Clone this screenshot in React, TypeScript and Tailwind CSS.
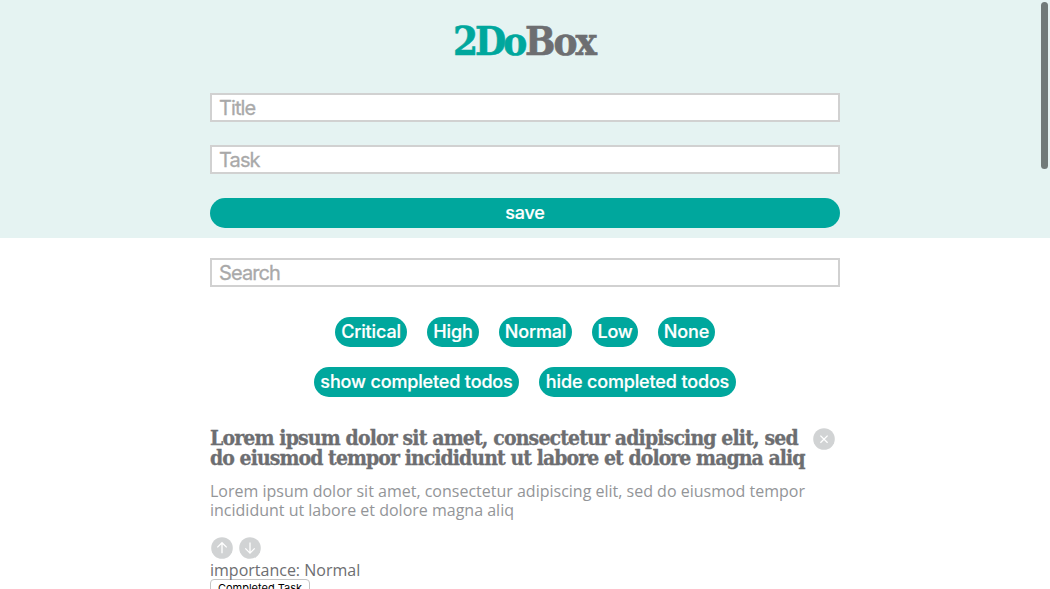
import React from "react";

const title = "font-['Roboto_Slab','DejaVu_Serif_Condensed','DejaVu_Serif',serif] font-bold";
const pill =
  "flex h-[30px] items-center justify-center rounded-full bg-[#00a79d] pb-px font-['Inter',sans-serif] text-[18px] font-medium tracking-[-0.15px] whitespace-nowrap text-white [-webkit-text-stroke:0.2px_white]";
const field =
  "block h-[29px] w-full rounded-none border-2 border-[#d1d1d1] bg-white pr-2 pl-[7px] font-['Inter',sans-serif] text-[20px] tracking-[-0.9px] text-[#6d6e71] outline-none placeholder:text-[#a9a9a9] [-webkit-text-stroke:0.3px_#a9a9a9]";

function CircleIcon({ label, d }: { label: string; d: string }) {
  return (
    <button aria-label={label} className="block size-[22px] shrink-0">
      <svg viewBox="0 0 22 22" className="size-[22px]" fill="none">
        <circle cx="11" cy="11" r="10.8" fill="#d1d3d4" />
        <path d={d} stroke="#fff" strokeWidth="1.3" />
      </svg>
    </button>
  );
}

export default function App() {
  return (
    <div className="relative h-[589px] overflow-hidden bg-white text-[#6d6e71]">
      <header className="h-[238px] bg-[#e5f3f2]">
        <div className="mx-auto w-[630px]">
          <h1 className={`${title} flex h-[93px] justify-center pt-[14px] text-[40px] leading-[54px] whitespace-nowrap [-webkit-text-stroke:0.6px_currentColor]`}>
            <span className="w-[72px] tracking-[-3px] text-[#00a79d]">2Do</span>
            <span className="w-[72px] tracking-[-2px]">Box</span>
          </h1>
          <input className={field} placeholder="Title" />
          <input className={`${field} mt-[23px]`} placeholder="Task" />
          <button className={`${pill} mt-6 w-full`}>save</button>
        </div>
      </header>
      <main className="mx-auto w-[630px] pt-5">
        <input className={field} placeholder="Search" />
        <div className="mt-[30px] flex justify-center gap-5">
          <button className={`${pill} w-[72px]`}>Critical</button>
          <button className={`${pill} w-[52px]`}>High</button>
          <button className={`${pill} w-[73px]`}>Normal</button>
          <button className={`${pill} w-[46px]`}>Low</button>
          <button className={`${pill} w-[57px]`}>None</button>
        </div>
        <div className="mt-5 flex justify-center gap-5">
          <button className={`${pill} w-[205px]`}>show completed todos</button>
          <button className={`${pill} w-[197px]`}>hide completed todos</button>
        </div>
        <article className="mt-[31px]">
          <div className="flex justify-between pr-[5px]">
            <h2 className={`${title} text-[21px] leading-5 whitespace-nowrap [-webkit-text-stroke:0.3px_currentColor]`}>
              <span className="block tracking-[-0.85px]">Lorem ipsum dolor sit amet, consectetur adipiscing elit, sed</span>
              <span className="block tracking-[-0.93px]">do eiusmod tempor incididunt ut labore et dolore magna aliq</span>
            </h2>
            <CircleIcon label="Delete" d="M7.4 7.6l7.2 7.2M14.6 7.6l-7.2 7.2" />
          </div>
          <p className="mt-[14px] font-['Open_Sans',sans-serif] text-[16px] leading-[19px] whitespace-nowrap text-[#939598]">
            Lorem ipsum dolor sit amet, consectetur adipiscing elit, sed do eiusmod tempor
            <br />
            incididunt ut labore et dolore magna aliq
          </p>
          <div className="mt-[17px] flex gap-[6px] pl-[1px]">
            <CircleIcon label="Raise importance" d="M11 16.2V5.8M6.3 10.4L11 5.7l4.7 4.7" />
            <CircleIcon label="Lower importance" d="M11 5.5V16M6.3 11.4L11 16.1l4.7-4.7" />
          </div>
          <p className="font-['Open_Sans',sans-serif] text-[16px] leading-[22px]">importance: Normal</p>
          <button className="-mt-[2px] block h-[18px] w-[100px] rounded-[4px] border border-[#c4c4c4] bg-white font-['Inter',sans-serif] text-[11px] leading-4 text-black">
            Completed Task
          </button>
        </article>
      </main>
      <div className="absolute top-[2px] right-[2px] h-[167px] w-[7px] rounded-full bg-[#717a79]" />
    </div>
  );
}
